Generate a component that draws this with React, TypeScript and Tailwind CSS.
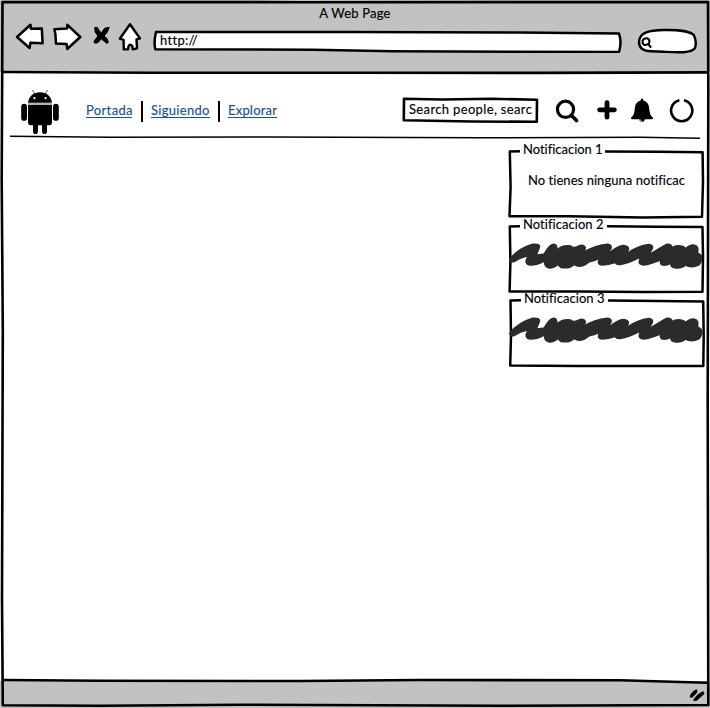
import type { ReactNode } from "react";

const ink = { fill: "none", stroke: "#000", strokeLinejoin: "round", strokeLinecap: "round" } as const;

function WindowFrame() {
  return (
    <svg className="pointer-events-none absolute inset-0" width="710" height="708" viewBox="0 0 710 708" aria-hidden="true">
      <g {...ink} strokeWidth="2.6">
        <path d="M2.5 2 L300 2.2 L708 2 L708.3 90 L707.7 400 L708.3 705 L500 705.8 L240 704.7 L100 705.8 L2.8 705.2 L2 600 L2.8 330 L1.7 180 L2.5 2" />
        <path d="M3 72 L150 72.8 L360 72.7 L540 72.9 L707 72.4" />
        <path d="M3 680 L100 680.8 L300 681 L420 680 L620 680.3 L707 682.8" />
      </g>
    </svg>
  );
}

function BackArrow() {
  return (
    <svg width="30" height="30" viewBox="0 0 30 30">
      <path d="M2 15 L15.5 2.8 L15.8 6.7 L26.8 6.4 L27.6 21.3 L15.4 20.8 L14.6 26 Z" {...ink} fill="#fff" strokeWidth="2.5" />
    </svg>
  );
}

function ForwardArrow() {
  return (
    <svg width="30" height="30" viewBox="0 0 30 30">
      <path d="M1.4 7.2 L14.2 6.4 L14.4 2.8 L27.3 15 L14.2 27 L13.6 22 L3 21.6 L2.4 12 Z" {...ink} fill="#fff" strokeWidth="2.5" />
    </svg>
  );
}

function StopIcon() {
  return (
    <svg width="18" height="21" viewBox="0 0 18 21">
      <path d="M2.8 2.6 L5.3 2.4 Q7 6 9.6 8 Q11.6 3.2 14 2.8 L17.2 2.4 Q16 7.5 12 11 Q16 13.2 16.4 17.4 Q14 19.4 12.8 16.8 L9.2 13.8 Q6.2 18.8 3.6 18.2 Q1 18 2.3 15.8 L6 11 Q2 7.4 2.8 2.6 Z" {...ink} fill="#000" strokeWidth="1" />
    </svg>
  );
}

function HomeIcon() {
  return (
    <svg width="24" height="30" viewBox="0 0 24 30">
      <path d="M12 2.2 Q16 8 22 16.4 L18.5 17.4 L19 26.3 L14.8 27.4 L14.3 24 Q12 21.5 10.6 24 L10 27.4 L5.8 27.4 L5.6 17.9 L1.8 16.7 Q6.5 10 12 2.2 Z" {...ink} fill="#fff" strokeWidth="2.4" />
    </svg>
  );
}

function BrowserBar() {
  return (
    <header className="h-[72px] shrink-0 bg-[#c2c2c2]">
      <h1 className="h-[22px] pt-1 text-center text-[13px] leading-[19px] tracking-[0.2px]">A Web Page</h1>
      <div className="flex pl-[15px]">
        <div className="flex h-[30px]">
          <BackArrow />
          <span className="ml-2"><ForwardArrow /></span>
          <span className="ml-[9px] mt-[3px]"><StopIcon /></span>
          <span className="ml-2"><HomeIcon /></span>
        </div>
        <div className="relative ml-[11px] mt-[7px] h-[24px] w-[470px]">
          <svg className="absolute inset-0" width="470" height="24" viewBox="0 0 470 24">
            <path d="M3 3 L200 3 L366 3.6 L466 4.6 Q469 13 466 23 L240 22.3 L160 20.7 L2.3 20.3 Q.6 13 3 3 Z" {...ink} fill="#fff" strokeWidth="2.5" />
          </svg>
          <span className="relative block pl-[7px] pt-[2px] text-[13px] leading-[18px] tracking-[0.3px]">http://</span>
        </div>
        <svg className="ml-[14px] mt-[5px]" width="62" height="28" viewBox="0 0 62 28">
          <path d="M2 15 C2 5 13 3.2 27 3 C43 2.6 54 5 56.8 8 Q60 15 58 21 C54 26.5 40 25.5 27 24.8 L14 24.2 C5 24 2 20 2 15 Z" {...ink} fill="#fff" strokeWidth="2.4" />
          <path d="M5.4 14.3 Q6.2 11 10.2 11.3 Q13.4 13 12 16.3 Q9.2 18.8 6.7 17.5 Q5.3 16.4 5.4 14.3 M11.2 16.8 L13.6 20" {...ink} strokeWidth="2.1" />
        </svg>
      </div>
    </header>
  );
}

function AndroidLogo() {
  return (
    <svg width="40" height="46" viewBox="0 0 40 46">
      <path d="M12.4 0 L15 4.5 M27.6 0 L25 4.5" stroke="#333" strokeWidth=".8" />
      <path d="M8 12.8 C8.7 5.8 13.8 2.2 20 2.2 S31.3 5.8 32 12.8 Z" />
      <rect x="1.2" y="13.8" width="5.8" height="17" rx="2.9" />
      <rect x="33" y="13.8" width="5.8" height="17" rx="2.9" />
      <path d="M8 15 H32 V32.8 Q32 35.2 29.6 35.2 H27 V41.2 Q27 44 24.5 44 Q22 44 22 41.2 V35.2 H18 V41.2 Q18 44 15.5 44 Q13 44 13 41.2 V35.2 H10.4 Q8 35.2 8 32.8 Z" />
      <path d="M8 14 H32" stroke="#aaa" strokeWidth="1.8" />
      <circle cx="14.4" cy="8.2" r="1.1" fill="#fff" />
      <circle cx="25.6" cy="8.2" r="1.1" fill="#fff" />
    </svg>
  );
}

function NavLink({ children, className }: { children: string; className: string }) {
  return (
    <a href="#" className={`block h-[15px] whitespace-nowrap border-b border-[#17528f] text-[13px] leading-[14px] text-[#17528f] ${className}`}>
      {children}
    </a>
  );
}

function SiteNav() {
  return (
    <nav className="relative flex h-[66px] shrink-0 pl-[20px]">
      <div className="mt-[18px]"><AndroidLogo /></div>
      <div className="mt-[29px] flex h-[21px]">
        <NavLink className="ml-[26px] mt-[2px] w-[46px] tracking-[0.35px]">Portada</NavLink>
        <i className="ml-[9px] w-[2px] bg-black" />
        <NavLink className="ml-[8px] mt-[2px] w-[59px] tracking-[0.3px]">Siguiendo</NavLink>
        <i className="ml-[8px] w-[2px] bg-black" />
        <NavLink className="ml-[8px] mt-[2px] w-[49px] tracking-[0.2px]">Explorar</NavLink>
      </div>
      <div className="relative ml-[125px] mt-[25px] h-[27px] w-[137px]">
        <svg className="absolute inset-0" width="137" height="27" viewBox="0 0 137 27">
          <path d="M2 1.8 L40 2.5 L90 1.8 L135 2.8 L134.8 24.8 L70 24.5 L1.8 23.2 Z" {...ink} fill="#fff" strokeWidth="2.6" />
        </svg>
        <span className="relative ml-[7px] mt-[3px] block w-[124px] overflow-hidden whitespace-nowrap text-[13px] leading-[18px] tracking-[0.35px]">Search people, searc</span>
      </div>
      <svg className="ml-[16px] mt-[26px]" width="25" height="25" viewBox="0 0 25 25">
        <circle cx="10.5" cy="11.3" r="8.1" fill="none" stroke="#000" strokeWidth="3.2" />
        <path d="M16.5 17.5 L21.5 22.5" {...ink} strokeWidth="3.7" />
      </svg>
      <svg className="ml-[17px] mt-[28px]" width="20" height="20" viewBox="0 0 20 20">
        <path d="M10 2.6 V17.2 M2.6 9.8 H17.4" {...ink} strokeWidth="4.8" />
      </svg>
      <svg className="ml-[13px] mt-[26px]" width="24" height="26" viewBox="0 0 24 26">
        <path d="M12 .6 Q13.5 .6 13.3 2.5 Q18.8 4 19.2 10 Q19.3 17 23 19.8 Q23.4 21.3 21.5 21.3 H15 Q14.5 24 12 24 Q9.5 24 9 21.3 H2.5 Q.6 21.3 1 19.8 Q4.7 17 4.8 10 Q5.2 4 10.7 2.5 Q10.5 .6 12 .6 Z" />
        <path d="M9.8 21 Q10.2 23 12 23" fill="none" stroke="#fff" strokeWidth=".6" />
      </svg>
      <svg className="ml-[15px] mt-[26px]" width="26" height="25" viewBox="0 0 26 25">
        <path d="M15 2.3 A10.6 10.6 0 1 1 10.4 2.3" fill="none" stroke="#000" strokeWidth="2.6" />
      </svg>
      <svg className="absolute -bottom-[2px] left-[10px]" width="690" height="5" viewBox="0 0 690 5">
        <path d="M0 1.3 L100 2.3 L260 2 L470 2.8 L630 2.3 L690 3.3" fill="none" stroke="#000" strokeWidth="1.5" />
      </svg>
    </nav>
  );
}

function Scribble() {
  return (
    <svg width="196" height="31" viewBox="24 75 588 93">
      <path
        d="M30 132 Q55 101 98 88 Q121 86 118 97 L108 121 L133 117 Q150 86 162 88 Q174 90 168 108 Q186 89 212 93 Q220 101 232 95 Q249 85 256 98 L252 112 Q282 92 323 88 Q335 90 333 99 L320 119 Q356 92 370 92 Q386 93 385 103 L378 117 Q415 92 446 89 Q460 91 457 100 L445 121 Q488 95 501 88 Q516 87 516 99 Q525 91 542 93 Q557 96 556 102 Q572 87 584 91 Q597 94 592 113 L603 121 Q609 135 597 149 Q575 160 556 150 Q546 161 524 158 Q513 156 512 145 Q496 153 485 149 Q480 145 482 134 Q452 147 431 150 Q417 148 418 140 L421 126 Q380 147 360 148 Q347 149 347 142 Q325 150 306 150 Q293 147 296 139 L300 129 Q280 139 266 141 Q247 157 230 152 L222 148 Q209 162 183 157 L173 148 Q162 161 146 158 Q132 155 135 137 Q113 149 91 150 Q76 147 79 136 L85 121 Q61 127 43 139 Q28 142 30 132 Z"
        fill="#2b2b2b" stroke="#2b2b2b" strokeWidth="5" strokeLinejoin="round"
      />
    </svg>
  );
}

function Notification({ title, outline, titleClass, className, children }: { title: string; outline: string; titleClass: string; className: string; children: ReactNode }) {
  return (
    <section className={`relative w-[197px] ${className}`}>
      <svg className="absolute inset-0" width="197" height="77" viewBox="0 0 197 77">
        <path d={outline} {...ink} strokeLinecap="butt" strokeWidth="2.5" />
      </svg>
      <h2 className={`relative h-[15px] whitespace-nowrap text-[13px] leading-[15px] ${titleClass}`}>{title}</h2>
      {children}
    </section>
  );
}

export default function App() {
  return (
    <main className="relative flex h-[708px] w-[710px] flex-col overflow-hidden bg-white text-black [-webkit-text-stroke:0.15px] [font-family:Lato,'Open_Sans',sans-serif]">
      <BrowserBar />
      <SiteNav />
      <div className="flex min-h-0 flex-1 flex-col items-end pr-[5px] pt-[4px]">
        <Notification title="Notificacion 1" className="h-[75px]" titleClass="ml-[15px] tracking-[-0.02px]"
          outline="M12 9.3 L1.8 9.6 L2.6 45 L1.5 74.3 L60 74.2 L135 75.4 L194 74.8 L195 40 L194.6 10.2 L150 9.8 L97 9.5">
          <p className="relative ml-[20px] mt-[14px] w-[157px] overflow-hidden whitespace-nowrap text-[13px] leading-[18px] tracking-[0.05px]">No tienes ninguna notificac</p>
        </Notification>
        <Notification title="Notificacion 2" className="h-[74px]" titleClass="ml-[15px] tracking-[0.05px]"
          outline="M12 9.3 L1.8 9.6 L2.4 45 L1.6 74.5 L70 74.5 L135 75 L194.5 74.8 L195 40 L194.5 10 L150 9.7 L99 9.2">
          <div className="relative mt-[8px]"><Scribble /></div>
        </Notification>
        <Notification title="Notificacion 3" className="h-[76px]" titleClass="ml-[16px] tracking-[0.05px]"
          outline="M13 9.3 L2.5 9.6 L3 45 L2.2 74.5 L70 75 L195.3 75 L195.7 45 L195.2 10.6 L150 10 L100 9.4">
          <div className="relative mt-[8px]"><Scribble /></div>
        </Notification>
      </div>
      <footer className="flex h-[27px] shrink-0 justify-end bg-[#c2c2c2] pr-[4px] pt-[7px]">
        <svg width="18" height="15" viewBox="0 0 18 15">
          <path d="M2.6 8.6 Q4 4.5 8.3 2.2 L8.4 4.2 L3.8 8.8 Z M6.2 12.2 Q9 7 15 4.2 L15.4 5.6 L8.5 11.8 Z" {...ink} fill="#000" strokeWidth="1.8" />
        </svg>
      </footer>
      <WindowFrame />
    </main>
  );
}
